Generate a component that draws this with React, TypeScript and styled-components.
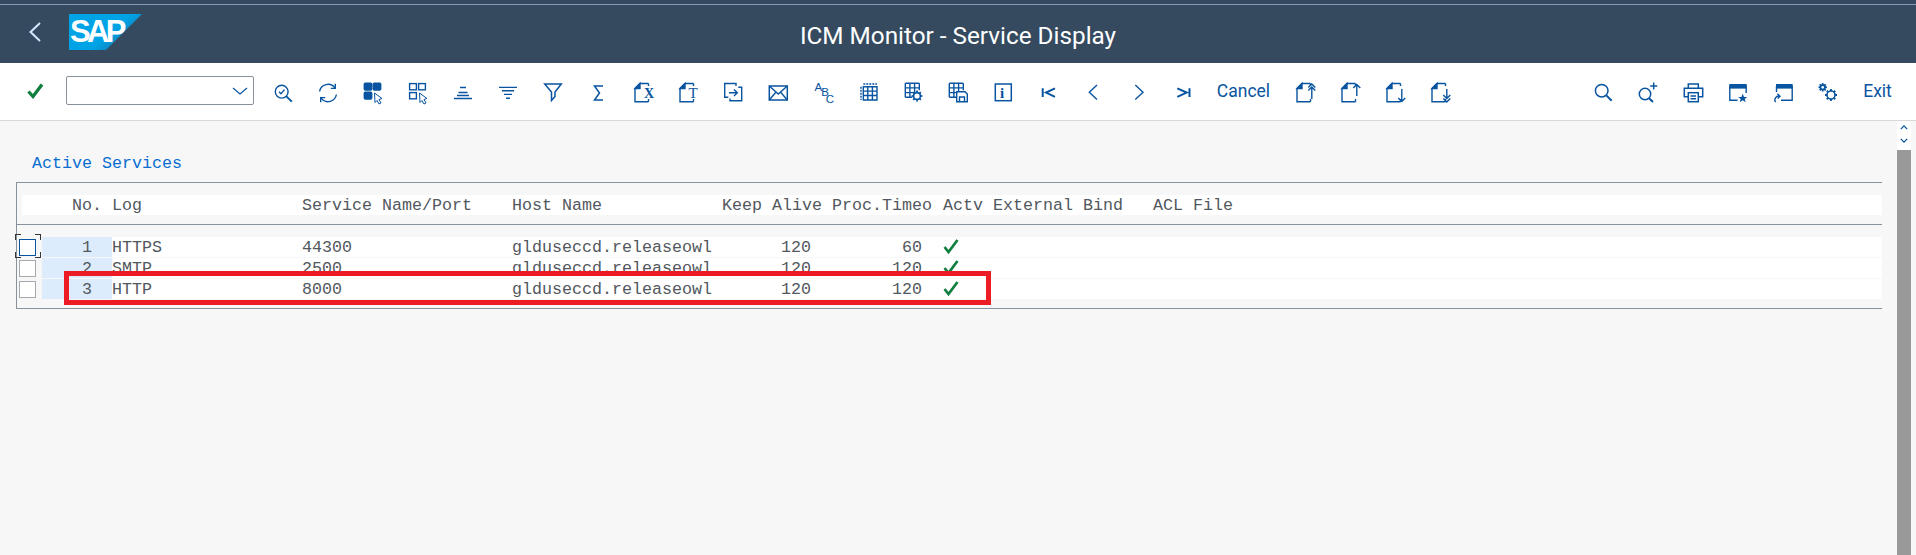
import React from 'react'
import styled, { createGlobalStyle } from 'styled-components'

const BLUE = '#0854a0'
const GREEN = '#107e3e'

const GlobalStyle = createGlobalStyle`
  html, body {
    margin: 0;
    padding: 0;
    height: 100%;
    overflow: hidden;
    background: #f7f7f7;
  }
`

const IconSvg = styled.svg`
  width: 24px;
  height: 24px;
  fill: none;
  stroke: ${BLUE};
  stroke-width: 1.4;
`

const IconLabel = styled.text`
  fill: ${BLUE};
  stroke: none;
`

const IconText: React.FC<{
  x: number
  y: number
  size: number
  weight?: number
  sans?: boolean
  children: string
}> = ({ x, y, size, weight = 400, sans, children }) => (
  <IconLabel
    x={x}
    y={y}
    fontSize={size}
    fontWeight={weight}
    fontFamily={sans ? 'Liberation Sans, sans-serif' : 'Liberation Serif, serif'}
  >
    {children}
  </IconLabel>
)

const Glyph: React.FC<{ children: React.ReactNode }> = ({ children }) => (
  <IconSvg viewBox='0 0 24 24'>{children}</IconSvg>
)

const Gear = ({ x, y, r }: { x: number; y: number; r: number }) => (
  <g>
    <circle cx={x} cy={y} r={r} strokeWidth={1.6} />
    {[0, 45, 90, 135, 180, 225, 270, 315].map((a) => {
      const c = Math.cos((a * Math.PI) / 180)
      const s = Math.sin((a * Math.PI) / 180)
      return (
        <line
          key={a}
          x1={x + c * r}
          y1={y + s * r}
          x2={x + c * (r + 2)}
          y2={y + s * (r + 2)}
          strokeWidth={1.8}
        />
      )
    })}
  </g>
)

const TableGrid = ({ x, y }: { x: number; y: number }) => (
  <path d={`M${x} ${y}h14M${x} ${y + 4.6}h14M${x} ${y + 9.3}h9M${x} ${y + 14}h7M${x} ${y}v14M${x + 4.6} ${y}v14M${x + 9.3} ${y}v9M${x + 14} ${y}v7`} />
)

const DocShape = () => (
  <g>
    <path d='M4 7.5V20.7H17.5M4 7.5L9 2.5H17.5M17.5 2.5V5M17.5 18V20.7' />
    <path d='M4 7.5L9 2.5V7.5Z' fill={BLUE} />
  </g>
)

const icons: Record<string, React.ReactNode> = {
  findCheck: (
    <>
      <circle cx='10.7' cy='10.7' r='6.4' />
      <path d='M8 10.8L10 12.8L13.5 8.6' />
      <path d='M15.4 15.4L20.8 20.6' strokeWidth={2} />
    </>
  ),
  refresh: (
    <>
      <path d='M3.6 10.5A8.5 8.5 0 0 1 18.8 6.8' />
      <path d='M19.3 2.8V7.4H14.8' />
      <path d='M20.4 13.5A8.5 8.5 0 0 1 5.2 17.2' />
      <path d='M4.7 21.2V16.6H9.2' />
    </>
  ),
  selectAll: (
    <>
      <rect x='3.3' y='2.3' width='7.4' height='6.8' rx='1' fill={BLUE} />
      <rect x='12.3' y='2.3' width='7.4' height='6.8' rx='1' fill={BLUE} />
      <rect x='3.3' y='11.3' width='7.4' height='6.8' rx='1' fill={BLUE} />
      <path d='M13.5 12L21 17.5L18 18.5L20 22L18 23L16 19.5L14 21.5Z' fill='#fff' strokeWidth={1} />
    </>
  ),
  deselectAll: (
    <>
      <rect x='3.6' y='2.6' width='6.8' height='6.2' />
      <rect x='12.6' y='2.6' width='6.8' height='6.2' />
      <rect x='3.6' y='11.6' width='6.8' height='6.2' />
      <path d='M13.5 12L21 17.5L18 18.5L20 22L18 23L16 19.5L14 21.5Z' fill='#fff' strokeWidth={1} />
    </>
  ),
  sortUp: <path d='M9 6.5H15M7.5 11.5H16.5M6 14.5H18M3 17.5H21' />,
  sortDown: <path d='M3 6.4H21M6 9.8H18M8 13.4H16M10 17.3H14' />,
  filter: <path d='M3.7 3H20.3L14 11V15.5L10.5 19.5V11Z' strokeWidth={1.5} />,
  sum: <path d='M17 5H8.5L13.5 12L8.5 19H17' strokeWidth={1.5} />,
  docX: (
    <>
      <DocShape />
      <IconText x={13} y={17} size={14} weight={700}>X</IconText>
    </>
  ),
  docT: (
    <>
      <DocShape />
      <IconText x={12.5} y={17} size={15} weight={400}>T</IconText>
    </>
  ),
  exportDoc: (
    <path d='M15 5V2.5H3.7V16.3H7.3M17.3 6.3H20.7V19.7H9V17.5M8 11.7H16M13 8.5L16.3 11.7L13 15' />
  ),
  mail: (
    <>
      <rect x='3.3' y='5' width='18' height='14' strokeWidth={1.5} />
      <path d='M3.3 5L12.3 13L21.3 5M3.3 19L10 11M21.3 19L14.5 11' />
    </>
  ),
  abc: (
    <>
      <IconText x={3.4} y={10} size={11.5} sans>A</IconText>
      <IconText x={10.2} y={15.4} size={11.5} sans>B</IconText>
      <IconText x={14.8} y={21.5} size={11.5} sans>C</IconText>
    </>
  ),
  table: (
    <>
      <path d='M7.3 3H21M5 5.7V19' strokeDasharray='2 1' />
      <path d='M7.3 5.7H21V19H7.3ZM7.3 10.1H21M7.3 14.5H21M11.8 5.7V19M16.4 5.7V19' />
    </>
  ),
  tableGear: (
    <>
      <TableGrid x={4.3} y={2.3} />
      <Gear x={16} y={15} r={3.4} />
    </>
  ),
  tableSave: (
    <>
      <TableGrid x={3.3} y={2.3} />
      <path d='M10.7 10.7H19L21.3 13V20.7H10.7Z' fill='#fff' />
      <path d='M13.5 20.7V16H18.5V20.7' />
    </>
  ),
  info: (
    <>
      <rect x='4.3' y='3' width='16' height='16.7' strokeWidth={1.5} />
      <IconText x={9} y={17} size={15} weight={700}>i</IconText>
    </>
  ),
  first: <path d='M6.7 7.3V15.9M19 7.3L10 11.6L19 15.9' strokeWidth={2} />,
  prev: <path d='M16 4L8.3 11.2L16 18.4' />,
  next: <path d='M9.3 4L17 11.2L9.3 18.4' />,
  last: <path d='M6.3 7.3L15.7 11.6L6.3 15.9M18.5 7.3V15.9' strokeWidth={2} />,
  uploadAll: (
    <>
      <DocShape />
      <path d='M18.8 18V6.5M15.3 6.5L18.8 3L22.3 6.5M15.3 9.5L18.8 6L22.3 9.5' />
    </>
  ),
  upload: (
    <>
      <DocShape />
      <path d='M18.8 15V3.5M15.3 7L18.8 3.5L22.3 7' />
    </>
  ),
  download: (
    <>
      <DocShape />
      <path d='M18.8 8V20.5M15.3 17L18.8 20.5L22.3 17' />
    </>
  ),
  downloadAll: (
    <>
      <DocShape />
      <path d='M18.8 8V17M15.3 14L18.8 17.5L22.3 14M15.3 17.5L18.8 21L22.3 17.5' />
    </>
  ),
  search: (
    <>
      <circle cx='10.7' cy='9.7' r='6.3' strokeWidth={1.5} />
      <path d='M15.3 14.4L20.7 19.7' strokeWidth={2} />
    </>
  ),
  searchMore: (
    <>
      <circle cx='9' cy='13' r='5.7' strokeWidth={1.5} />
      <path d='M13 17.2L17 21' strokeWidth={2} />
      <path d='M17.7 1.5V8.5M14.2 5H21.2' />
    </>
  ),
  print: (
    <>
      <path d='M7.3 7.3V3H17.3V7.3' strokeWidth={1.5} />
      <path d='M7.3 15.7H3.3V7.3H21.7V15.7H17.3' strokeWidth={1.5} />
      <rect x='7.3' y='11.7' width='10' height='9' fill='#fff' strokeWidth={1.5} />
      <path d='M9.5 15H15M9.5 17.8H15' />
    </>
  ),
  favWindow: (
    <>
      <rect x='3.3' y='3' width='17.4' height='4.6' fill={BLUE} stroke='none' />
      <path d='M3.8 5V19.2H11.5M20.2 5V12' strokeWidth={1.4} />
      <path d='M16.7 12.8L18 16H21.3L18.7 18L19.7 21.2L16.7 19.2L13.7 21.2L14.7 18L12.1 16H15.4Z' fill={BLUE} stroke='none' />
    </>
  ),
  returnWindow: (
    <>
      <rect x='5' y='3' width='16.7' height='4.6' fill={BLUE} stroke='none' />
      <path d='M5.5 5V11M21.2 5V19.2H10' strokeWidth={1.4} />
      <path d='M4.6 21.2A4 4 0 0 1 8.6 15M6.4 12.8L9 15.2L6.6 17.6' strokeWidth={1.4} />
    </>
  ),
  settings: (
    <>
      <Gear x={15} y={14} r={4} />
      <Gear x={6.7} y={6.3} r={2.2} />
    </>
  ),
}

const leftTools = [
  'findCheck', 'refresh', 'selectAll', 'deselectAll', 'sortUp', 'sortDown', 'filter', 'sum',
  'docX', 'docT', 'exportDoc', 'mail', 'abc', 'table', 'tableGear', 'tableSave', 'info',
  'first', 'prev', 'next', 'last',
]
const middleTools = ['uploadAll', 'upload', 'download', 'downloadAll']
const rightTools = ['search', 'searchMore', 'print', 'favWindow', 'returnWindow', 'settings']

const columns = [
  { title: 'Log', width: 190 },
  { title: 'Service Name/Port', width: 210 },
  { title: 'Host Name', width: 210 },
  { title: 'Keep Alive', width: 110 },
  { title: 'Proc.Timeo', width: 111 },
  { title: 'Actv', width: 50 },
  { title: 'External Bind', width: 160 },
  { title: 'ACL File', width: 200 },
]

const services = [
  { no: 1, log: 'HTTPS', port: '44300', host: 'glduseccd.releaseowl', alive: 120, timeout: 60 },
  { no: 2, log: 'SMTP', port: '2500', host: 'glduseccd.releaseowl', alive: 120, timeout: 120 },
  { no: 3, log: 'HTTP', port: '8000', host: 'glduseccd.releaseowl', alive: 120, timeout: 120 },
]

const App: React.FC = () => (
  <Page>
    <GlobalStyle />
    <ShellBar>
      <ShellLine />
      <ShellRow>
        <Brand>
          <BackArrow viewBox='0 0 12 20'>
            <path d='M11 1L1.5 10L11 19' />
          </BackArrow>
          <LogoMark>SAP</LogoMark>
        </Brand>
        <ShellTitle>ICM Monitor - Service Display</ShellTitle>
      </ShellRow>
    </ShellBar>

    <Toolbar>
      <ToolButton $width={45}>
        <OkMark viewBox='0 0 17 16'>
          <path d='M1.5 8.5L6 13.5L15 1.5' />
        </OkMark>
      </ToolButton>
      <CommandField>
        <FieldArrow viewBox='0 0 16 8'>
          <path d='M1 1L8 7L15 1' />
        </FieldArrow>
      </CommandField>
      <ToolGroup>
        {leftTools.map((name) => (
          <ToolButton key={name} $width={45}>
            <Glyph>{icons[name]}</Glyph>
          </ToolButton>
        ))}
        <TextButton $width={77}>Cancel</TextButton>
        {middleTools.map((name) => (
          <ToolButton key={name} $width={45}>
            <Glyph>{icons[name]}</Glyph>
          </ToolButton>
        ))}
      </ToolGroup>
      <RightGroup>
        {rightTools.map((name) => (
          <ToolButton key={name} $width={45}>
            <Glyph>{icons[name]}</Glyph>
          </ToolButton>
        ))}
        <TextButton $width={55}>Exit</TextButton>
      </RightGroup>
    </Toolbar>

    <Content>
      <Main>
        <SectionTitle>Active Services</SectionTitle>
        <TableBox>
          <HeaderRow>
            <HeaderGutter />
            <HeaderNo>No.</HeaderNo>
            {columns.map(({ title, width }) => (
              <Cell key={title} $width={width}>{title}</Cell>
            ))}
          </HeaderRow>
          <Divider />
          {services.map(({ no, log, port, host, alive, timeout }) => (
            <Row key={no}>
              <Gutter>
                <CheckBox $focused={no === 1} />
              </Gutter>
              <NoCell>{no}</NoCell>
              <RowBody>
                <Cell $width={190}>{log}</Cell>
                <Cell $width={210}>{port}</Cell>
                <Cell $width={210}>{host}</Cell>
                <NumberCell $width={110} $inset={21}>{alive}</NumberCell>
                <NumberCell $width={111} $inset={21}>{timeout}</NumberCell>
                <Cell $width={50}>
                  <ActiveMark viewBox='0 0 16 15'>
                    <path d='M1.5 8L5.5 13L14.5 1' />
                  </ActiveMark>
                </Cell>
              </RowBody>
            </Row>
          ))}
          <Highlight />
        </TableBox>
      </Main>
      <ScrollBar>
        <ScrollButtons>
          <ScrollArrow viewBox='0 0 10 6'>
            <path d='M1 5L5 1L9 5' />
          </ScrollArrow>
          <ScrollArrow viewBox='0 0 10 6'>
            <path d='M1 1L5 5L9 1' />
          </ScrollArrow>
        </ScrollButtons>
        <ScrollThumb />
      </ScrollBar>
    </Content>
  </Page>
)

const Page = styled.div`
  display: flex;
  flex-direction: column;
  height: 100vh;
  overflow: hidden;
  font-family: Roboto, 'Liberation Sans', sans-serif;
`

const ShellBar = styled.header`
  flex: none;
  display: flex;
  flex-direction: column;
  height: 63px;
  padding-top: 4px;
  box-sizing: border-box;
  background: #354a5f;
`

const ShellLine = styled.div`
  height: 1px;
  background: #7f9ab5;
`

const ShellRow = styled.div`
  flex: 1;
  display: grid;
  grid-template-columns: 1fr auto 1fr;
  align-items: center;
`

const Brand = styled.div`
  display: flex;
  align-items: center;
  gap: 28px;
  padding: 0 0 4px 29px;
`

const BackArrow = styled.svg`
  width: 12px;
  height: 20px;
  fill: none;
  stroke: #d1e8ff;
  stroke-width: 2;
`

const LogoMark = styled.div`
  width: 73px;
  height: 36px;
  padding-left: 1px;
  box-sizing: border-box;
  clip-path: polygon(0 0, 100% 0, 50.7% 100%, 0 100%);
  background: linear-gradient(140deg, #00a3e6 55%, #1b72a6 85%);
  color: #fff;
  font: 900 31px/35px 'Liberation Sans', sans-serif;
  letter-spacing: -3.6px;
`

const ShellTitle = styled.h1`
  margin: 2px 0 0;
  color: #fff;
  font-size: 24.3px;
  font-weight: 400;
  white-space: nowrap;
`

const Toolbar = styled.div`
  flex: none;
  display: flex;
  align-items: center;
  height: 58px;
  padding: 2px 11px 0 13px;
  box-sizing: border-box;
  background: #fff;
  border-bottom: 1px solid #d9d9d9;
`

const ToolGroup = styled.div`
  display: flex;
  align-items: center;
  margin-left: 6px;
`

const RightGroup = styled(ToolGroup)`
  margin-left: auto;
`

const ToolButton = styled.button<{ $width: number }>`
  flex: none;
  display: flex;
  align-items: center;
  justify-content: center;
  width: ${({ $width }) => $width}px;
  height: 30px;
  padding: 0;
  border: 0;
  background: none;
  color: ${BLUE};
  font: 400 17.5px Roboto, sans-serif;
`

const TextButton = styled(ToolButton)`
  padding-bottom: 3px;
`

const OkMark = styled.svg`
  width: 17px;
  height: 16px;
  margin-bottom: 3px;
  fill: none;
  stroke: ${GREEN};
  stroke-width: 3.3;
`

const CommandField = styled.div`
  flex: none;
  display: flex;
  align-items: center;
  justify-content: flex-end;
  width: 188px;
  height: 29px;
  margin: 0 0 4px 8px;
  padding-right: 5px;
  box-sizing: border-box;
  background: #fff;
  border: 1px solid #89919a;
  border-radius: 2px;
`

const FieldArrow = styled.svg`
  width: 16px;
  height: 8px;
  fill: none;
  stroke: ${BLUE};
  stroke-width: 1.2;
`

const Content = styled.main`
  flex: 1;
  display: flex;
  min-height: 0;
  padding-right: 5px;
  font: 400 16.67px/20px 'Liberation Mono', monospace;
  color: #52585e;
`

const Main = styled.div`
  flex: 1;
  min-width: 0;
  padding-top: 33px;
`

const SectionTitle = styled.h2`
  margin: 0 0 8px 32px;
  color: #0a6ed1;
  font: inherit;
`

const TableBox = styled.div`
  position: relative;
  margin: 0 15px 0 16px;
  padding: 12px 0 8px;
  border-top: 1px solid #89919a;
  border-bottom: 1px solid #89919a;
  border-left: 1px solid #89919a;
`

const HeaderRow = styled.div`
  display: flex;
  height: 20px;
  margin-left: 5px;
  background: #fff;
`

const HeaderGutter = styled.div`
  flex: none;
  width: 20px;
`

const HeaderNo = styled.div`
  flex: none;
  width: 70px;
  height: 20px;
  padding: 1px 10px 0 0;
  box-sizing: border-box;
  text-align: right;
`

const Divider = styled.div`
  height: 1px;
  margin: 9px 0 12px;
  background: #89919a;
`

const Row = styled.div`
  display: flex;
  height: 20px;
  margin-bottom: 1px;
`

const Gutter = styled.div`
  flex: none;
  display: flex;
  align-items: center;
  width: 25px;
  padding-left: 2px;
  box-sizing: border-box;
`

const CheckBox = styled.div<{ $focused: boolean }>`
  position: relative;
  width: 17px;
  height: 17px;
  box-sizing: border-box;
  background: #fff;
  border: 1.5px solid ${({ $focused }) => ($focused ? BLUE : '#a3a8ae')};

  ${({ $focused }) =>
    $focused &&
    `
    &::before {
      content: '';
      position: absolute;
      inset: -5.5px -5.5px -3.5px -5.5px;
      background:
        linear-gradient(#32363a, #32363a) 0 0 / 6px 1px,
        linear-gradient(#32363a, #32363a) 0 0 / 1px 6px,
        linear-gradient(#32363a, #32363a) 100% 0 / 6px 1px,
        linear-gradient(#32363a, #32363a) 100% 0 / 1px 6px,
        linear-gradient(#32363a, #32363a) 0 100% / 6px 1px,
        linear-gradient(#32363a, #32363a) 0 100% / 1px 6px,
        linear-gradient(#32363a, #32363a) 100% 100% / 6px 1px,
        linear-gradient(#32363a, #32363a) 100% 100% / 1px 6px;
      background-repeat: no-repeat;
    }
  `}
`

const NoCell = styled.div`
  flex: none;
  width: 70px;
  height: 20px;
  padding: 1px 20px 0 0;
  box-sizing: border-box;
  text-align: right;
  background: #dcecfc;
`

const RowBody = styled.div`
  flex: 1;
  display: flex;
  background: #fff;
`

const Cell = styled.div<{ $width: number }>`
  flex: none;
  display: flex;
  align-items: center;
  width: ${({ $width }) => $width}px;
  padding-top: 2px;
  box-sizing: border-box;
  white-space: pre;
`

const NumberCell = styled(Cell)<{ $inset: number }>`
  justify-content: flex-end;
  padding-right: ${({ $inset }) => $inset}px;
`

const ActiveMark = styled.svg`
  width: 16px;
  height: 15px;
  margin-bottom: 3px;
  fill: none;
  stroke: ${GREEN};
  stroke-width: 2.7;
`

const Highlight = styled.div`
  position: absolute;
  left: 47px;
  top: 88px;
  width: 927px;
  height: 34px;
  box-sizing: border-box;
  border: 5px solid #ed1c24;
`

const ScrollBar = styled.div`
  flex: none;
  display: flex;
  flex-direction: column;
  width: 14px;
`

const ScrollButtons = styled.div`
  flex: none;
  display: flex;
  flex-direction: column;
  align-items: center;
  gap: 8px;
  height: 29px;
  padding-top: 4px;
  box-sizing: border-box;
  background: #fff;
`

const ScrollArrow = styled.svg`
  width: 8px;
  height: 5px;
  fill: none;
  stroke: ${BLUE};
  stroke-width: 1.6;
`

const ScrollThumb = styled.div`
  flex: 1;
  background: #999;
`

export default App
